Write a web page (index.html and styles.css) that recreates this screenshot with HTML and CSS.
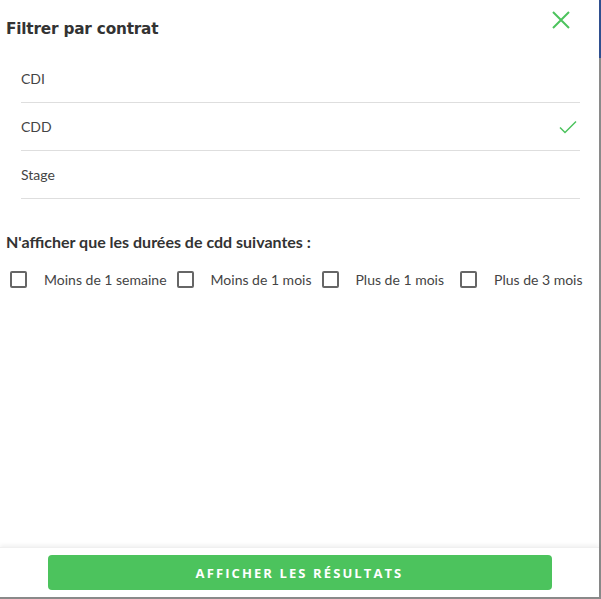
FILE: index.html
```html
<!DOCTYPE html>
<html lang="fr">
<head>
<meta charset="utf-8">
<title>Filtrer par contrat</title>
<link rel="stylesheet" href="styles.css">
</head>
<body>
<div class="panel">
  <div class="content">
    <div class="header">
      <h1 class="title">Filtrer par contrat</h1>
      <button class="close" aria-label="Fermer">
        <svg width="20" height="20" viewBox="0 0 20 20"><path d="M2 2 L18 18 M18 2 L2 18" stroke="#4cc35d" stroke-width="2" fill="none"/></svg>
      </button>
    </div>
    <ul class="list">
      <li class="item">CDI</li>
      <li class="item">CDD
        <svg class="check" width="18" height="14" viewBox="0 0 18 14"><path d="M1 7.5 L6 12.5 L17 1.5" stroke="#4cc35d" stroke-width="1.5" fill="none"/></svg>
      </li>
      <li class="item">Stage</li>
    </ul>
    <h2 class="subtitle">N'afficher que les durées de cdd suivantes :</h2>
    <div class="options">
      <label class="opt"><span class="box"></span>Moins de 1 semaine</label>
      <label class="opt"><span class="box"></span>Moins de 1 mois</label>
      <label class="opt opt-wide"><span class="box"></span>Plus de 1 mois</label>
      <label class="opt"><span class="box"></span>Plus de 3 mois</label>
    </div>
  </div>
  <div class="footer">
    <button class="cta">AFFICHER LES RÉSULTATS</button>
  </div>
</div>
</body>
</html>
```
FILE: styles.css
```css
html, body {
  margin: 0;
  padding: 0;
}
body {
  width: 601px;
  height: 599px;
  background: linear-gradient(to bottom, #2f4f8f 0, #2f4f8f 58px, #8a8a8a 58px, #8a8a8a 100%);
  font-family: "Lato", "Open Sans", sans-serif;
  color: #444;
}
.panel {
  width: 599px;
  height: 597px;
  background: #fff;
  display: flex;
  flex-direction: column;
}
.content {
  flex: 1;
}
.header {
  display: flex;
  justify-content: space-between;
  align-items: flex-start;
  padding: 10px 28px 0 6px;
  height: 55px;
  box-sizing: border-box;
}
.title {
  margin: 10px 0 0;
  font-family: "DejaVu Sans", sans-serif;
  font-size: 15.3px;
  font-weight: 700;
  color: #333;
  letter-spacing: -0.2px;
}
.close {
  border: 0;
  background: none;
  padding: 0;
  width: 20px;
  height: 20px;
  cursor: pointer;
}
.close svg { display: block; }
.list {
  list-style: none;
  margin: 0 19px 0 21px;
  padding: 0;
}
.item {
  height: 48px;
  border-bottom: 1px solid #dedede;
  display: flex;
  align-items: center;
  justify-content: space-between;
  font-size: 14px;
  color: #444;
  box-sizing: border-box;
}
.check { margin-right: 3px; }
.subtitle {
  margin: 33px 0 0 6px;
  font-size: 16px;
  font-weight: 700;
  color: #333;
}
.options {
  display: flex;
  align-items: center;
  margin: 20px 0 0 10px;
  gap: 10px;
}
.opt {
  display: flex;
  align-items: center;
  gap: 17px;
  font-size: 14px;
  color: #444;
}
.opt-wide { margin-right: 6px; }
.box {
  width: 17px;
  height: 17px;
  box-sizing: border-box;
  border: 2px solid #666;
  border-radius: 2px;
}
.footer {
  height: 50px;
  box-shadow: 0 -2px 4px rgba(0,0,0,0.06);
  border-top: 1px solid #f0f0f0;
  display: flex;
  justify-content: center;
  padding-top: 7px;
  box-sizing: border-box;
}
.cta {
  width: 504px;
  height: 35px;
  background: #4cc35d;
  border: 0;
  border-radius: 4px;
  color: #fff;
  font-family: "Open Sans", "Lato", sans-serif;
  font-weight: 700;
  font-size: 13px;
  letter-spacing: 2.1px;
}
```
